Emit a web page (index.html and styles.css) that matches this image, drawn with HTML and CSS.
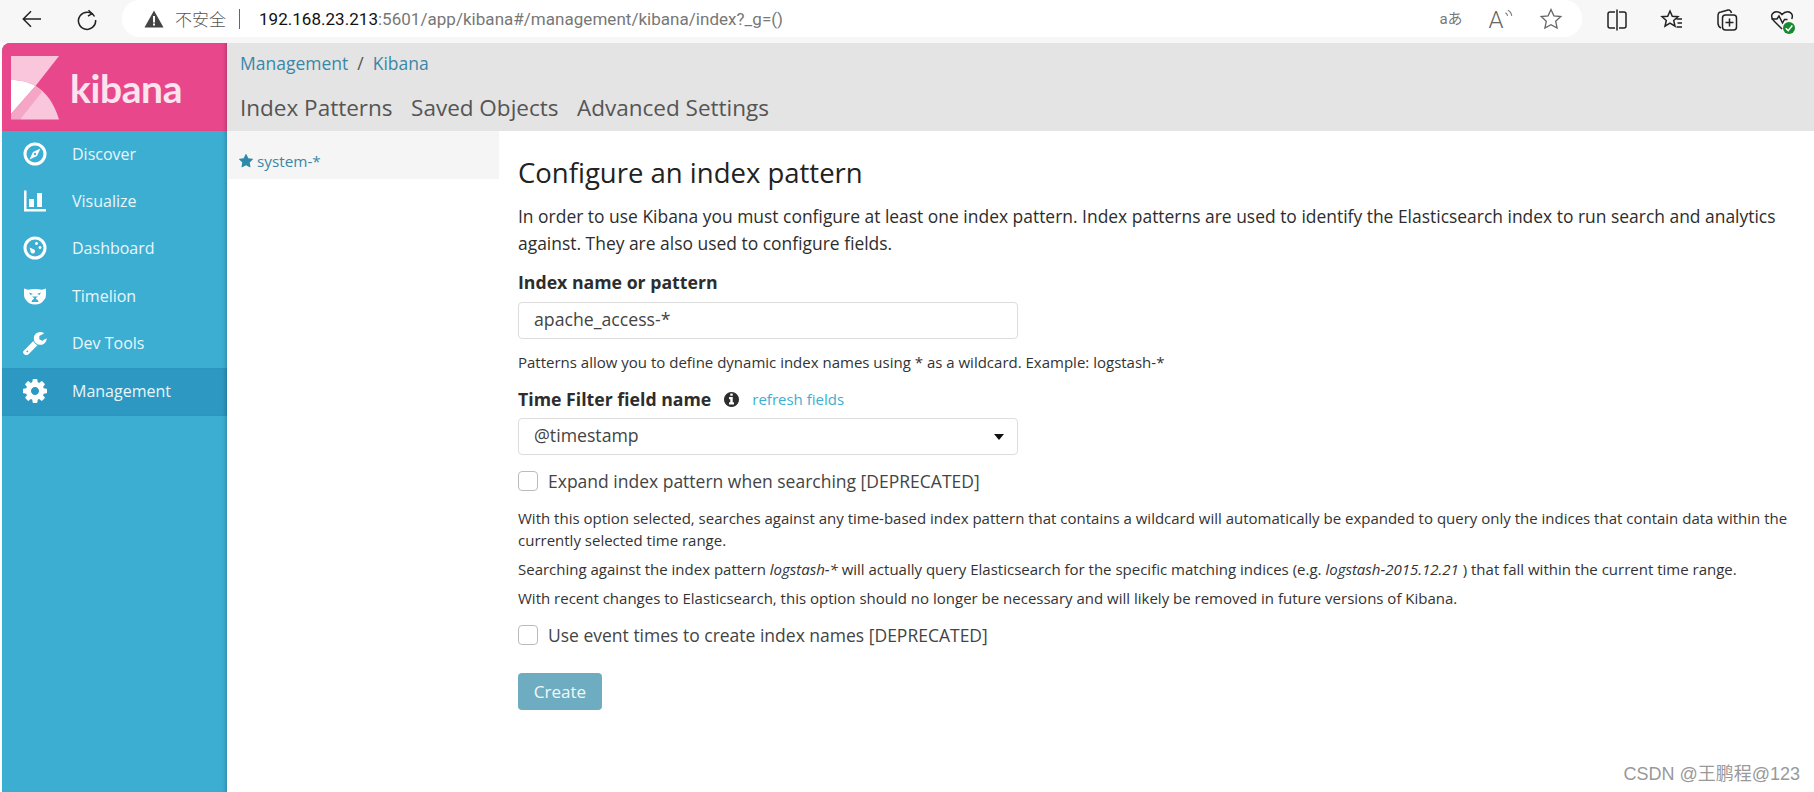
FILE: index.html
```html
<!DOCTYPE html>
<html lang="en">
<head>
<meta charset="utf-8">
<title>Kibana</title>
<link rel="stylesheet" href="styles.css">
</head>
<body>
<header class="chrome">
  <svg class="nav-icon back" viewBox="0 0 24 24"><path d="M21 12H3.500M11 4.200 3.300 12l7.700 7.800"/></svg>
  <svg class="nav-icon reload" viewBox="0 0 24 24"><path d="M19.500 9.500A8.600 8.600 0 1 0 20.600 13"/><path d="M13.500 3.200 17 6.600l-4 2.600"/></svg>
  <div class="omnibox">
    <svg class="warn" viewBox="0 0 20 20"><path d="M10 1.500 19.500 18.500H.5z"/><rect class="warn-mark" x="9" y="7" width="2" height="6.500"/><rect class="warn-mark" x="9" y="14.500" width="2" height="2"/></svg>
    <span class="insecure">不安全</span>
    <span class="sep"></span>
    <span class="url"><span class="host">192.168.23.213</span>:5601/app/kibana#/management/kibana/index?_g=()</span>
    <span class="omni-actions">
      <span class="translate">aあ</span>
      <span class="read"><span class="read-a">A</span><svg class="read-waves" viewBox="0 0 8 10"><path d="M1 4c1 .4 1.600 1.400 1.800 2.600M3 1.800c2 .8 3 2.600 3.300 4.800"/></svg></span>
      <svg class="omni-icon star" viewBox="0 0 24 24"><path d="m12 2.500 2.900 6.300 6.900.8-5.100 4.700 1.400 6.800-6.100-3.400-6.100 3.400 1.400-6.800-5.100-4.700 6.900-.8z"/></svg>
    </span>
  </div>
  <div class="tools">
    <svg class="tool" viewBox="0 0 24 24"><path d="M10 4H5a2 2 0 0 0-2 2v12a2 2 0 0 0 2 2h5M14 4h5a2 2 0 0 1 2 2v12a2 2 0 0 1-2 2h-5M12 1.500v21"/></svg>
    <svg class="tool" viewBox="0 0 24 24"><path d="m10 3 2.300 5.200 5.700.5-4.300 3.800 1.300 5.600-5-3-5 3 1.300-5.600L2 8.700l5.700-.5zM16.500 11H22M17.500 15H22M16.500 19H22"/></svg>
    <svg class="tool" viewBox="0 0 24 24"><path d="M6 20c-2-1-3-3-3-5V8c0-2 1-4 3-4l7-2c2-.3 3 1 3.500 3"/><rect x="7.500" y="7" width="14" height="15" rx="3"/><path d="M14.500 10.500v8M10.500 14.500h8"/></svg>
    <span class="health">
      <svg class="tool" viewBox="0 0 24 24"><path d="M12 21 4 13c-2-2-3-4-2-6.500C3.500 3 8.500 2.500 12 6.500 15.500 2.500 20.500 3 22 6.500c.6 1.500.4 3-.3 4.500"/><path d="M1.500 11H7l2-3 3.500 7 2-3.500h3"/></svg>
      <span class="health-dot"><svg viewBox="0 0 10 10"><path d="M2.300 5.200 4.300 7.200 7.800 3"/></svg></span>
    </span>
  </div>
</header>

<div class="app">
  <aside class="sidebar">
    <div class="brand">
      <svg class="brand-mark" viewBox="0 0 48 63.500">
        <path class="mark-a" d="M0 0H48L24.500 30C17 26 10 24 0 24z"/>
        <path class="mark-b" d="M24.500 30C35 36 43 47 48 63.500H9z"/>
        <path class="mark-c" d="M0 24C10 24 17 26 24.500 30L0 58z"/>
        <path class="mark-d" d="M24.500 30C27 31.500 29 33.500 31 36L9 63.500H0V58z"/>
      </svg>
      <span class="brand-name">kibana</span>
    </div>
    <nav class="menu">
      <a class="menu-item">
        <svg class="menu-icon" viewBox="0 0 24 24"><circle class="ring" cx="12" cy="12" r="10"/><path d="M17.500 6.500 14 14l-7.500 3.500L10 10zM12 10.800a1.200 1.200 0 1 0 .01 0z" fill-rule="evenodd"/></svg>
        <span>Discover</span>
      </a>
      <a class="menu-item">
        <svg class="menu-icon" viewBox="0 0 24 24"><path d="M1 1.500h2.500V20H23v2.500H1z"/><rect x="6" y="10" width="5" height="8"/><rect x="14" y="4" width="5" height="14"/></svg>
        <span>Visualize</span>
      </a>
      <a class="menu-item">
        <svg class="menu-icon" viewBox="0 0 24 24"><circle class="ring" cx="12" cy="12" r="10"/><path d="M6.500 11.500 11 13.500c1.500.8 1.500 3-.2 3.700C9 18 7 16.500 7.500 14.500zM13.500 6a1.500 1.500 0 1 1-.01 0zM17 10a1.500 1.500 0 1 1-.01 0z"/></svg>
        <span>Dashboard</span>
      </a>
      <a class="menu-item">
        <svg class="menu-icon" viewBox="0 0 24 24"><path fill-rule="evenodd" d="M1 4.500l4 1.200q7-1.500 14 0l4-1.200V11q0 3-2 5-3 4.500-9 4.500T3 16q-2-2-2-5zM6 8.500l1.500 2.500 2.500-1zM18 8.500l-1.500 2.500-2.500-1zM9 12.500l2 1.500v1q-2.300.6-2.500 3h7q-.2-2.400-2.500-3v-1l2-1.500z"/></svg>
        <span>Timelion</span>
      </a>
      <a class="menu-item">
        <svg class="menu-icon" viewBox="0 0 1664 1664"><path d="M363 1408q0-26-19-45t-45-19-45 19-19 45 19 45 45 19 45-19 19-45zm644-420l-682 682q-37 37-90 37-52 0-91-37l-106-108q-38-36-38-90 0-53 38-91l681-681q39 98 114.500 173.500t173.500 114.500zm634-435q0 39-23 106-47 134-164.500 217.500t-258.500 83.500q-185 0-316.500-131.500t-131.500-316.500 131.500-316.500 316.500-131.500q58 0 121.500 16.500t107.500 46.500q16 11 16 28t-16 28l-293 169v224l193 106q5-3 79-48.500t135.500-81 70.500-35.500q15 0 23.500 10t8.500 25z"/></svg>
        <span>Dev Tools</span>
      </a>
      <a class="menu-item active">
        <svg class="menu-icon" viewBox="0 -128 1536 1536"><path d="M1024 640q0-106-75-181t-181-75-181 75-75 181 75 181 181 75 181-75 75-181zm512-109v222q0 12-8 23t-20 13l-185 28q-19 54-39 91 35 50 107 138 10 12 10 25t-9 23q-27 37-99 108t-94 71q-12 0-26-9l-138-108q-44 23-91 38-16 136-29 186-7 28-36 28h-222q-14 0-24.500-8.500t-11.500-21.500l-28-184q-49-16-90-37l-141 107q-10 9-25 9-14 0-25-11-126-114-165-168-7-10-7-23 0-12 8-23 15-21 51-66.500t54-70.500q-27-50-41-99l-183-27q-13-2-21-12.500t-8-23.500v-222q0-12 8-23t19-13l186-28q14-46 39-92-40-57-107-138-10-12-10-24 0-10 9-23 26-36 98.500-107.500t94.500-71.500q13 0 26 10l138 107q44-23 91-38 16-136 29-186 7-28 36-28h222q14 0 24.500 8.500t11.500 21.500l28 184q49 16 90 37l142-107q9-9 24-9 13 0 25 10 129 119 165 170 7 8 7 22 0 12-8 23-15 21-51 66.500t-54 70.500q26 50 41 98l183 28q13 2 21 12.500t8 23.500z"/></svg>
        <span>Management</span>
      </a>
    </nav>
  </aside>

  <div class="workspace">
    <div class="subnav">
      <div class="crumbs"><a>Management</a><span class="slash">/</span><a>Kibana</a></div>
      <div class="tabs"><a>Index Patterns</a><a>Saved Objects</a><a>Advanced Settings</a></div>
    </div>
    <div class="panes">
      <div class="patterns">
        <a class="pattern">
          <svg class="pattern-star" viewBox="0 0 1664 1664"><path d="M1664 615q0 22-26 48l-363 354 86 500q1 7 1 20 0 21-10.500 35.500t-30.500 14.500q-19 0-40-12l-449-236-449 236q-22 12-40 12-21 0-31.500-14.500t-10.500-35.500q0-6 2-20l86-500-364-354q-25-27-25-48 0-37 56-46l502-73 225-455q19-41 49-41t49 41l225 455 502 73q56 9 56 46z"/></svg>
          <span>system-*</span>
        </a>
      </div>
      <main class="form">
        <h1>Configure an index pattern</h1>
        <p class="lead">In order to use Kibana you must configure at least one index pattern. Index patterns are used to identify the Elasticsearch index to run search and analytics against. They are also used to configure fields.</p>
        <label class="field-label first">Index name or pattern</label>
        <div class="control">apache_access-*</div>
        <p class="help one">Patterns allow you to define dynamic index names using * as a wildcard. Example: logstash-*</p>
        <div class="label-row">
          <label class="field-label">Time Filter field name</label>
          <svg class="info" viewBox="0 128 1536 1536"><path d="M1024 1376v-160q0-14-9-23t-23-9h-96v-512q0-14-9-23t-23-9h-320q-14 0-23 9t-9 23v160q0 14 9 23t23 9h96v320h-96q-14 0-23 9t-9 23v160q0 14 9 23t23 9h448q14 0 23-9t9-23zm-128-896v-160q0-14-9-23t-23-9h-192q-14 0-23 9t-9 23v160q0 14 9 23t23 9h192q14 0 23-9t9-23zm640 416q0 209-103 385.500t-279.500 279.500-385.500 103-385.500-103-279.500-279.500-103-385.500 103-385.500 279.500-279.500 385.500-103 385.500 103 279.500 279.500 103 385.500z"/></svg>
          <a class="refresh">refresh fields</a>
        </div>
        <div class="control select">@timestamp<span class="caret"></span></div>
        <div class="check"><span class="box"></span><span>Expand index pattern when searching [DEPRECATED]</span></div>
        <p class="help two">With this option selected, searches against any time-based index pattern that contains a wildcard will automatically be expanded to query only the indices that contain data within the currently selected time range.</p>
        <p class="help">Searching against the index pattern <em>logstash-*</em> will actually query Elasticsearch for the specific matching indices (e.g. <em>logstash-2015.12.21</em> ) that fall within the current time range.</p>
        <p class="help">With recent changes to Elasticsearch, this option should no longer be necessary and will likely be removed in future versions of Kibana.</p>
        <div class="check last"><span class="box"></span><span>Use event times to create index names [DEPRECATED]</span></div>
        <button class="create" type="button">Create</button>
      </main>
    </div>
  </div>
</div>
<div class="watermark">CSDN @王鹏程@123</div>
</body>
</html>
```
FILE: styles.css
```css
* { box-sizing: border-box; }
html, body { margin: 0; height: 100%; overflow: hidden; }
body {
  background: #fff;
  color: #2d2d2d;
  font-family: "Open Sans", "Noto Sans CJK SC", sans-serif;
  position: relative;
}
a { color: inherit; text-decoration: none; }

/* browser chrome */
.chrome {
  height: 43px;
  background: #f7f7f7;
  display: flex;
  align-items: flex-start;
}
.nav-icon { fill: none; stroke: #222; stroke-width: 1.5; flex: none; width: 24px; height: 24px; margin-top: 7px; }
.back { margin-left: 20px; }
.reload { margin-left: 31px; }
.omnibox {
  margin-left: 23px;
  width: 1460px;
  height: 37px;
  background: #fff;
  border-radius: 18px;
  display: flex;
  align-items: center;
  padding-left: 22px;
  font-family: "Roboto", "Noto Sans CJK SC", sans-serif;
}
.warn { width: 20px; height: 20px; fill: #444; flex: none; }
.warn-mark { fill: #fff; }
.insecure { margin-left: 11px; font-size: 17px; color: #555; font-weight: 300; }
.sep { width: 1px; height: 20px; background: #666; margin: 0 19px 0 13px; }
.url { font-size: 17px; color: #777; letter-spacing: .03px; white-space: nowrap; }
.host { color: #111; }
.omni-actions { margin-left: auto; margin-right: 19px; display: flex; align-items: center; gap: 26px; }
.translate {
  width: 24px;
  text-align: center;
  font-size: 15px;
  line-height: 24px;
  color: #777;
  white-space: nowrap;
}
.read { width: 24px; height: 24px; display: flex; align-items: flex-start; justify-content: center; }
.read-a { font-size: 24px; font-weight: 300; line-height: 26px; color: #666; }
.read-waves { width: 10px; height: 12px; fill: none; stroke: #777; stroke-width: .9; margin-top: 1px; flex: none; }
.omni-icon { width: 24px; height: 24px; fill: none; stroke: #666; stroke-width: 1.3; }
.tools { display: flex; align-items: center; gap: 31px; margin-left: 23px; height: 37px; margin-top: 1px; }
.tool { width: 24px; height: 24px; fill: none; stroke: #222; stroke-width: 1.5; display: block; }
.health { position: relative; display: block; }
.health-dot { position: absolute; right: -1px; bottom: -2px; width: 12px; height: 12px; border-radius: 50%; background: #168a2f; }
.health-dot svg { display: block; width: 12px; height: 12px; fill: none; stroke: #fff; stroke-width: 1.3; }

/* app */
.app { display: flex; height: 749px; }
.sidebar {
  margin-left: 2px;
  width: 225px;
  flex: none;
  background: #3caed2;
  border-top-left-radius: 8px;
  overflow: hidden;
  box-shadow: inset -4px 0 4px -3px rgba(0,0,0,.25);
}
.brand {
  height: 88px;
  background: #e8488b;
  display: flex;
  align-items: flex-start;
  padding: 13px 0 0 9px;
  box-shadow: inset -4px 0 4px -3px rgba(0,0,0,.25);
}
.brand-mark { width: 48px; height: 63.500px; flex: none; }
.mark-a, .mark-b { fill: #f9c6dc; }
.mark-c { fill: #fff; }
.mark-d { fill: #f5a6c7; }
.brand-name {
  margin: 9px 0 0 11px;
  font-family: "Lato", sans-serif;
  font-size: 39px;
  font-weight: 700;
  line-height: 46px;
  color: #fce4ef;
  letter-spacing: -.4px;
}
.menu { display: flex; flex-direction: column; }
.menu-item {
  height: 47.400px;
  display: flex;
  align-items: center;
  padding: 0 0 2px 21px;
  color: #fff;
  font-size: 16px;
}
.menu-item span { margin-left: 25px; color: #e9f6fb; }
.menu-item.active {
  background: #2d98c1;
  height: 48px;
  box-shadow: inset -4px 0 4px -3px rgba(0,0,0,.25);
}
.menu-icon { width: 24px; height: 24px; fill: #fff; flex: none; }
.ring { fill: none; stroke: #fff; stroke-width: 3; }

.workspace { flex: 1; display: flex; flex-direction: column; min-width: 0; }
.subnav { height: 88px; background: #e4e4e4; padding: 8px 0 0 13px; }
.crumbs { font-size: 17.500px; line-height: 25px; color: #3a87a8; }
.slash { color: #555; margin: 0 9px; }
.tabs { margin-top: 16px; display: flex; gap: 18.500px; font-size: 22.500px; line-height: 31px; color: #555; }
.panes { flex: 1; display: flex; }
.patterns { width: 272px; flex: none; }
.pattern {
  height: 48px;
  background: #f5f5f5;
  display: flex;
  align-items: center;
  padding: 11px 0 0 12px;
  font-size: 15.300px;
  color: #3a87a8;
}
.pattern span { margin-left: 4px; }
.pattern-star { width: 14px; height: 14px; fill: #2f89a8; flex: none; }

.form { flex: 1; padding: 24px 17px 0 19px; min-width: 0; }
.form h1 { margin: 0; font-size: 27.500px; font-weight: 400; line-height: 36px; color: #222; }
.lead { margin: 12px 0 0; font-size: 17.450px; line-height: 27px; }
.field-label { display: block; font-size: 17.700px; font-weight: 700; line-height: 24px; color: #2d2d2d; }
.field-label.first { margin-top: 13px; }
.control {
  height: 37px;
  width: 500px;
  border: 1px solid #ddd;
  border-radius: 4px;
  padding-left: 15px;
  font-size: 17.700px;
  line-height: 33px;
  color: #444;
  position: relative;
}
.field-label.first + .control { margin-top: 8px; }
.help { margin: 7px 0 0; font-size: 15px; line-height: 22px; color: #333; }
.help.one { margin-top: 12px; }
.label-row { display: flex; align-items: center; margin-top: 14px; height: 24px; }
.info { width: 15px; height: 15px; fill: #2d2d2d; margin-left: 13px; flex: none; }
.refresh { margin-left: 13px; font-size: 15px; color: #3caed2; }
.select { margin-top: 7px; }
.caret {
  position: absolute;
  right: 13px;
  top: 15px;
  border-style: solid;
  border-width: 6px 5px 0;
  border-color: #111 transparent transparent;
}
.check { display: flex; align-items: center; gap: 10px; margin-top: 16px; font-size: 17.500px; color: #444; height: 20px; }
.box { width: 20px; height: 20px; border: 1px solid #bbb; border-radius: 4px; background: #fff; flex: none; }
.help.two { margin-top: 16px; }
.create {
  display: block;
  margin-top: 28px;
  width: 84px;
  height: 37px;
  background: #6eadc1;
  color: #f2f8fa;
  border: 0;
  border-radius: 4px;
  font: 400 17px "Open Sans", sans-serif;
  padding: 0;
}
.watermark {
  position: absolute;
  right: 14px;
  top: 763px;
  font-family: "Liberation Sans", "Noto Sans CJK SC", sans-serif;
  font-size: 18px;
  line-height: 22px;
  color: #999;
}
```
